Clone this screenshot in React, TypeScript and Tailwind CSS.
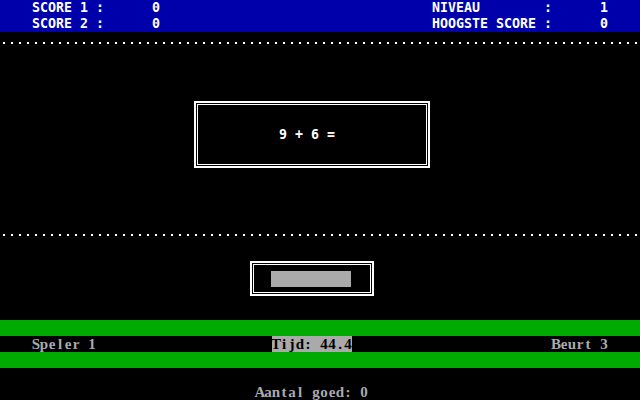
import React from "react";

const sans = "font-['DejaVu_Sans_Mono',monospace] font-bold text-[13.29px] leading-4 whitespace-pre";
const serif = "font-['Liberation_Serif',serif] font-bold text-[15px] leading-4";

function Dots() {
  return (
    <div className="h-4 w-full">
      <div className="mt-[10px] h-[2px] w-full bg-[linear-gradient(90deg,transparent_3px,#ffffff_3px,#ffffff_5px,transparent_5px)] bg-[length:8px_2px]" />
    </div>
  );
}

function Cells({ text }: { text: string }) {
  return (
    <span className="inline-flex">
      {text.split("").map((c, i) => (
        <span key={i} className="w-2 h-4 inline-flex justify-center overflow-visible whitespace-pre">
          {c}
        </span>
      ))}
    </span>
  );
}

export default function App() {
  return (
    <div className="w-[640px] h-[400px] bg-black overflow-hidden flex flex-col">
      {/* header */}
      <div className={`h-8 bg-[#0000aa] text-white ${sans}`}>
        <div className="flex h-4">
          <div className="w-[432px] pl-8 flex">
            <span className="w-[120px]">SCORE 1 :</span>
            <span>0</span>
          </div>
          <div className="flex">
            <span className="w-[168px]">NIVEAU        :</span>
            <span>1</span>
          </div>
        </div>
        <div className="flex h-4">
          <div className="w-[432px] pl-8 flex">
            <span className="w-[120px]">SCORE 2 :</span>
            <span>0</span>
          </div>
          <div className="flex">
            <span className="w-[168px]">HOOGSTE SCORE :</span>
            <span>0</span>
          </div>
        </div>
      </div>

      <Dots />

      {/* question area */}
      <div className="h-[176px]">
        <div className="ml-[194px] mt-[53px] w-[236px] h-[67px] border-2 border-white p-px">
          <div className="w-full h-full border border-white">
            <div className={`pt-[22px] pl-[81px] text-white ${sans}`}>9 + 6 =</div>
          </div>
        </div>
      </div>

      <Dots />

      {/* answer area */}
      <div className="h-[80px]">
        <div className="ml-[250px] mt-[21px] w-[124px] h-[35px] border-2 border-white p-px">
          <div className="w-full h-full border border-white pl-[17px] pt-[6px]">
            <div className="w-[80px] h-4 bg-[#aaaaaa]" />
          </div>
        </div>
      </div>

      {/* status */}
      <div className="h-4 bg-[#00aa00]" />
      <div className={`h-4 flex text-[#aaaaaa] ${serif}`}>
        <div className="w-[272px] pl-8"><Cells text="Speler 1" /></div>
        <div className="w-[80px] bg-[#aaaaaa] text-black"><Cells text="Tijd: 44.4" /></div>
        <div className="pl-[200px]"><Cells text="Beurt 3" /></div>
      </div>
      <div className="h-4 bg-[#00aa00]" />
      <div className="h-4" />
      <div className={`h-4 pl-[256px] text-[#aaaaaa] ${serif}`}><Cells text="Aantal goed: 0" /></div>
    </div>
  );
}
